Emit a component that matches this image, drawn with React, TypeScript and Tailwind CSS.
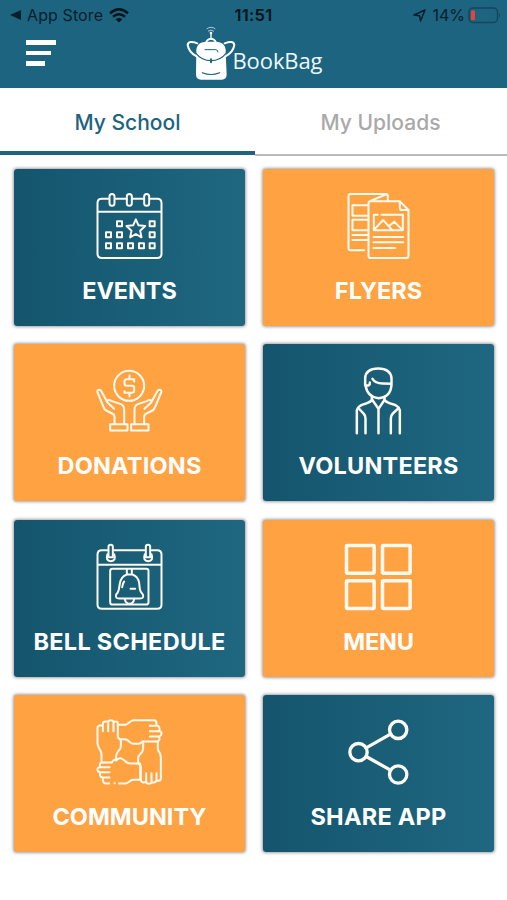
import type { ReactNode } from "react";
import clsx from "clsx";

type Tile = {
  label: string;
  tone: "teal" | "orange";
  viewBox: string;
  tracking: string;
  icon: ReactNode;
};

const tiles: Tile[] = [
  { label: "EVENTS", tone: "teal", viewBox: "40.5 30 216 216", tracking: "tracking-[-0.1px]", icon: <EventsIcon /> },
  { label: "FLYERS", tone: "orange", viewBox: "37.5 30 216 216", tracking: "tracking-[0px]", icon: <FlyersIcon /> },
  { label: "DONATIONS", tone: "orange", viewBox: "40.5 16.5 216 216", tracking: "tracking-[0.2px]", icon: <DonationsIcon /> },
  { label: "VOLUNTEERS", tone: "teal", viewBox: "37.5 16.5 216 216", tracking: "tracking-[0.2px]", icon: <VolunteersIcon /> },
  { label: "BELL SCHEDULE", tone: "teal", viewBox: "40.5 16.5 216 216", tracking: "tracking-[0.3px]", icon: <BellIcon /> },
  { label: "MENU", tone: "orange", viewBox: "37.5 16.5 216 216", tracking: "tracking-[-0.2px]", icon: <MenuIcon /> },
  { label: "COMMUNITY", tone: "orange", viewBox: "40.5 16.5 216 216", tracking: "tracking-[0px]", icon: <CommunityIcon /> },
  { label: "SHARE APP", tone: "teal", viewBox: "37.5 16.5 216 216", tracking: "tracking-[0.25px]", icon: <ShareIcon /> },
];

function EventsIcon() {
  const days = [
    [120, 131], [218, 131],
    [87, 164], [120, 164], [218, 164],
    [87, 197], [120, 197], [153, 197], [186, 197], [218, 197],
  ];
  return (
    <g strokeWidth="6">
      <path d="M89 56H67q-13 0-13 13v152q0 13 13 13h166q13 0 13-13V69q0-13-13-13h-22M107 56h34M159 56h34M54 95h192" />
      <rect x="90" y="42" width="15" height="35" rx="7.5" />
      <rect x="142" y="42" width="15" height="35" rx="7.5" />
      <rect x="194" y="42" width="15" height="35" rx="7.5" />
      {days.map(([x, y]) => (
        <rect key={`${x}-${y}`} x={x - 7.5} y={y - 7.5} width="15" height="15" />
      ))}
      <path d="m169 118 8 18 20 2-15 14 4 20-17-10-17 10 4-20-15-14 20-2z" />
    </g>
  );
}

function FlyersIcon() {
  return (
    <g strokeWidth="6">
      <path d="M104 211H64q-7 0-7-7V49q0-7 7-7h104q7 0 7 7v13M123 63l47-20" />
      <path d="M115 76H69v31h46M115 119H69v32h46M69 165h45M69 180h45" />
      <path d="M211 64h-87q-7 0-7 7v156q0 7 7 7h106q7 0 7-7V90zM211 64v19q0 7 7 7h19" />
      <path d="M145 104h-12v47h87v-47h-64M134 149l27-29 28 31M179 138l15-13 24 24" />
      <path d="M132 171h89M132 187h89M132 204h65" />
    </g>
  );
}

function DonationsIcon() {
  return (
    <g strokeWidth="6">
      <circle cx="149" cy="79" r="45" />
      <path d="M164 66v-7h-22q-7 0-7 7v6q0 7 7 7h15q7 0 7 7v7q0 7-7 7h-22v-5M150 48v11M150 100v11" />
      <path d="M105 194v-23q0-6-7-9l-18-9q-6-3-8-11L54 99q-2-7 4-8 5-1 8 5l18 33 20 19M94 139l-9-9q-4-5 1-8 4-2 9 2l29 10q10 4 10 17v43M92 194h52v19H92z" />
      <path d="M165 194v-43q0-13 10-17l29-10q5-4 9-2 5 3 1 8l-9 9M195 148l20-19 18-33q3-6 8-5 6 1 4 8l-18 43q-2 8-8 11l-18 9q-7 3-7 9v23M155 194h52v19h-52z" />
    </g>
  );
}

function VolunteersIcon() {
  return (
    <g strokeWidth="7.5">
      <path d="M113 78h-6V56q2-29 39-29t40 29v20q-3 38-39 40-34-3-39-39 14 4 13-8M129 58q8 13 30 14l27 1" />
      <path d="M127 112v10q-7 8-24 12-16 5-21 18v69M165 112v10q7 8 25 12 17 5 21 18v69" />
      <path d="m128 121 19 27 18-27M147 148v73M86 145l16 17q6 6 6 15v44M208 145l-18 17q-6 6-6 15v44" />
    </g>
  );
}

function BellIcon() {
  return (
    <g strokeWidth="6">
      <path d="M83 44H67q-13 0-13 13v150q0 13 13 13h166q13 0 13-13V57q0-13-13-13h-16M104 44h91M54 88h192" />
      <path d="M87 62V34q0-6 6.5-6t6.5 6v28M199 62V34q0-6 6.5-6t6.5 6v28" />
      <path d="M84 56q-7 20 10 21 17-1 10-21M196 56q-7 20 10 21 17-1 10-21" />
      <path d="M87 65h13M199 65h13" />
      <rect x="92" y="100" width="115" height="107" rx="7" />
      <path d="M142 101v15M157 101v15M142 117q-18 7-21 27l-3 18q-2 9-8 15-4 12 9 12h62q14 0 9-12-8-7-9-17l-2-17q-3-20-20-26z" />
      <path d="M134 138q-5 6-6 17M153 160h14M136 191q2 13 14 14 12-1 14-14" />
    </g>
  );
}

function MenuIcon() {
  return (
    <g strokeWidth="10.5">
      <rect x="51" y="30" width="83" height="83" rx="2" />
      <rect x="159" y="30" width="83" height="83" rx="2" />
      <rect x="51" y="136" width="83" height="83" rx="2" />
      <rect x="159" y="136" width="83" height="83" rx="2" />
    </g>
  );
}

function CommunityIcon() {
  return (
    <g strokeWidth="6">
      {/* left fist, pointing up */}
      <path d="M66 155v-22q0-8-5-16l-5-10q-2-4-2-10V53q0-7 6-8h10M70 62V40q0-7 8-7h7M86 62V36q0-7 8-7 8 0 8 7v26M102 38q0-5 6-5 7 0 7 6v41q5 7 9 9v18q0 7-5 12-8 8-9 16v16" />
      {/* top fist, pointing right */}
      <path d="M115 43h20q6 0 10-4l8-6q4-4 10-4h59q9 0 9 9v8M211 46h22q6 0 7 8v7M211 62h29q7 1 6 8-1 7-7 8h-28M239 78q4 15-8 15h-42q-7 7-12 7h-14q-7 0-12-5-7-9-16-9h-13" />
      {/* right fist, pointing down */}
      <path d="M235 94v20q0 6 5 12 4 7 4 15v62q0 7-6 8h-7M231 188v20q0 8-9 8h-5M216 188v25q0 7-8 7t-8-7v-25M200 212q-2 5-8 4-8-1-8-8v-41q-7-6-8-13v-11q0-7 6-12 9-8 9-17V96" />
      {/* bottom fist, pointing left */}
      <path d="M112 148q7-6 14-4l9 6q8 9 18 9h28M107 148q-6 0-10 8H69q-8 0-8 7v7M90 170H61q-8 1-7 8 1 7 8 7h28M62 185q-3 16 9 16h19M70 201q-1 18 9 18h10M105 218h1M119 219h18q6 0 11-5 8-6 14-6h20M182 160v47" />
    </g>
  );
}

function ShareIcon() {
  return (
    <g strokeWidth="10">
      <circle cx="87" cy="125" r="26" />
      <circle cx="206" cy="58" r="26" />
      <circle cx="206" cy="192" r="26" />
      <path d="m110 112 73-41M110 138l73 41" />
    </g>
  );
}

function StatusBar() {
  return (
    <div className="grid h-[30px] grid-cols-[1fr_60px_1fr] items-center pl-[10px] pr-[6px] text-[16px] text-[#07202b]">
      <div className="flex items-center">
        <svg className="h-[10px] w-[12px]" viewBox="0 0 12 10" fill="currentColor">
          <path d="M11 0v10L0 5z" />
        </svg>
        <span className="ml-[5px] tracking-[0.1px]">App Store</span>
        <svg className="ml-[6px] h-[15px] w-[20px]" viewBox="0 0 20 15" fill="none" stroke="#03131a" strokeWidth="2.5">
          <path d="M1 5.2Q10-2.6 19 5.2M4 8.7q6-5 12 0" />
          <path d="m10 14.5-3.3-3.2q3.3-2.5 6.6 0z" fill="#03131a" stroke="none" />
        </svg>
      </div>
      <span className="-ml-[4px] text-center text-[16.5px] font-semibold tracking-[0.3px] text-[#03131a]">11:51</span>
      <div className="flex items-center justify-end">
        <svg className="mr-[6px] h-[13px] w-[13px]" viewBox="0 0 13 13" fill="none" stroke="currentColor" strokeWidth="1.5" strokeLinejoin="round">
          <path d="M12 1 1 6l5.5.7L7.5 12z" />
        </svg>
        <span>14%</span>
        <svg className="ml-[3px] h-[17px] w-[33px]" viewBox="0 0 33 17" fill="none">
          <rect x="1" y="1" width="28.5" height="14.5" rx="4" stroke="#12475c" strokeWidth="1.5" />
          <rect x="3" y="3.3" width="4" height="10" rx="1.5" fill="#ed4135" />
          <path d="M31 6q2 2.3 0 4.6z" fill="#12475c" />
        </svg>
      </div>
    </div>
  );
}

function Logo() {
  return (
    <div className="flex items-start">
      <svg className="h-[56px] w-[50px]" viewBox="0 0 150 168" fill="none" stroke="#fff" strokeLinecap="round">
        <path d="M63 8q12-9 24 0M67 15q8-6 16 0" strokeWidth="3" opacity=".65" />
        <path d="M75 20v20" strokeWidth="4" />
        <circle cx="75" cy="21" r="4" fill="#fff" stroke="none" />
        <path d="M60 50q3-10 15-12 12 2 15 12" strokeWidth="5" />
        <path d="M34 52Q7 42 5 57q4 23 27 34M116 52q27-10 29 5-4 23-27 34" strokeWidth="6" />
        <path d="M31 78q-2-30 31-31h26q33 1 31 31l3 67q0 16-15 16H45q-15 0-15-16z" fill="#fff" stroke="none" />
        <g stroke="#1c6480">
          <path d="M57 71h32q7 0 7 7" strokeWidth="3" />
          <path d="M30 82q17 22 45 22t45-22M49 140q26 11 52 0" strokeWidth="3.5" />
          <path d="M75 100v9" strokeWidth="6" />
        </g>
      </svg>
      <span className="-ml-[3px] mt-[19px] font-['Open_Sans','Noto_Sans',sans-serif] text-[22px] leading-[30px] tracking-[-0.1px] text-[#eef8fc]">
        BookBag
      </span>
    </div>
  );
}

function Header() {
  return (
    <header className="h-[88px] bg-[#1c6480]">
      <StatusBar />
      <div className="grid grid-cols-[185.5px_1fr]">
        <div className="flex flex-col gap-[6px] pl-[26px] pt-[10px]">
          <div className="h-[4.5px] w-[30px] bg-white" />
          <div className="h-[4.5px] w-[25px] bg-white" />
          <div className="h-[4.5px] w-[19px] bg-white" />
        </div>
        <div className="-mt-[4.5px]">
          <Logo />
        </div>
      </div>
    </header>
  );
}

function Tabs() {
  return (
    <nav className="grid h-[68px] grid-cols-[255px_252px] text-center text-[21px] font-medium">
      <div className="mb-[1px] border-b-4 border-[#1c6480] pt-[19px] leading-8 text-[#1c6480]">My School</div>
      <div className="border-b-2 border-[#b9b9b9] pt-[19px] pr-[1px] leading-8 text-[#a9a9a9]">My Uploads</div>
    </nav>
  );
}

function TileCard({ tile }: { tile: Tile }) {
  return (
    <div
      className={clsx(
        "flex h-[157px] flex-col items-center rounded-[3px] pt-[21px] text-white shadow-[0_0_3px_1px_rgba(70,70,80,0.5)]",
        tile.tone === "teal" ? "bg-linear-to-r from-[#14556d] to-[#1f6781]" : "bg-[#ffa242]",
      )}
    >
      <svg className="mr-[1px] h-[72px] w-[72px]" viewBox={tile.viewBox} fill="none" stroke="#fffaf0" strokeLinecap="round" strokeLinejoin="round">
        {tile.icon}
      </svg>
      <span className={clsx("mt-[13px] whitespace-nowrap text-[23.5px] leading-8 font-bold", tile.tracking)}>
        {tile.label}
      </span>
    </div>
  );
}

export default function App() {
  return (
    <main className="h-[900px] w-[507px] overflow-hidden bg-white font-['Inter','Liberation_Sans',sans-serif]">
      <Header />
      <Tabs />
      <div className="grid grid-cols-2 gap-x-[18px] gap-y-[18.4px] pl-[14px] pr-[13px] pt-[13px]">
        {tiles.map((tile) => (
          <TileCard key={tile.label} tile={tile} />
        ))}
      </div>
    </main>
  );
}
